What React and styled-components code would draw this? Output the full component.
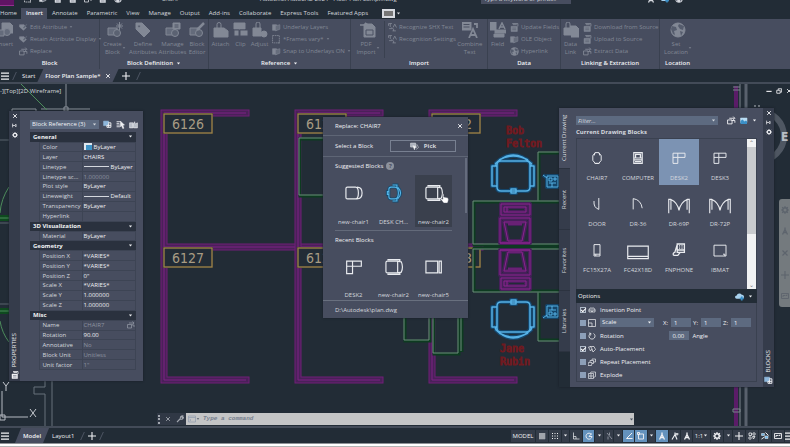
import React from "react"
import styled, { createGlobalStyle, css } from "styled-components"

const colors = {
  base: "#222c36",
  panel: "#474d5f",
  strip: "#353c4b",
  dark: "#2a313e",
  field: "#5d6a80",
  line: "#3a4150",
  text: "#d5d8de",
  bright: "#f0f1f4",
  muted: "#828895",
  active: "#6492bd",
}

const GlobalStyle = createGlobalStyle`
  * {
    box-sizing: border-box;
  }
  body {
    margin: 0;
    background: ${colors.base};
    overflow: hidden;
  }
  body, button, input, select {
    font-family: "Open Sans", "Noto Sans", sans-serif;
    font-size: 6px;
    line-height: 8px;
    color: ${colors.text};
  }
  button, input, select {
    margin: 0;
    padding: 0;
    border: 0;
    border-radius: 0;
    background: none;
  }
  h2, h3, p {
    margin: 0;
    font-size: 6px;
    line-height: 8px;
  }
  svg {
    display: block;
    flex: none;
  }
`

/* ---------- icons ---------- */

const paths = {
  caret: <path d="M3 5h10l-5 6z" fill="currentColor" stroke="none" />,
  menu: <path d="M0 2h16M0 8h16M0 14h16" strokeWidth="2.5" />,
  close: <path d="M3 3l10 10M13 3L3 13" strokeWidth="2.4" />,
  plus: <path d="M8 0v16M0 8h16" strokeWidth="2.2" />,
  min: <path d="M1 9h14" strokeWidth="3" />,
  restore: <path d="M2 6h9v8H2zM6 6V2h9v9h-4" strokeWidth="2.2" />,
  pin: <path d="M2 2v12M2 8h6M8 8l5-4v8z" strokeWidth="2.4" />,
  gear: <g><circle cx="8" cy="8" r="4.5" strokeWidth="3" /><path d="M8 0v3M8 13v3M0 8h3M13 8h3M2.3 2.3l2 2M11.7 11.7l2 2M2.3 13.7l2-2M11.7 4.3l2-2" strokeWidth="2.2" /></g>,
  insert: <g><path d="M5 1h8l3 3v7H5z" fill="currentColor" /><circle cx="10" cy="10" r="3.5" fill="#646b7b" /><path d="M0 8h7v6H0z" fill="#646b7b" /></g>,
  create: <g><path d="M1 6h9v7H1z" fill="#646b7b" /><circle cx="10" cy="11" r="3.5" fill="#5b6272" /><path d="M12.5 0v8M9 4h7M10 1.500l5 5M15 1.500l-5 5" /></g>,
  tag: <path fillRule="evenodd" d="M1 1h6l8 8-6 6-8-8zM4 3a1.200 1.200 0 1 0 .1 0z" fill="currentColor" />,
  manage: <g><path d="M1 6h9v7H1z" fill="#646b7b" /><circle cx="10" cy="11" r="3.5" fill="#5b6272" /><path d="M8 1h7v6H8z" fill="currentColor" /><path d="M9.500 3h4M9.500 5h4" stroke="#4b5162" /></g>,
  editor: <g><path d="M1 6h9v7H1z" fill="#646b7b" /><circle cx="10" cy="11" r="3.500" fill="#5b6272" /><path d="M8 8l7-7" strokeWidth="2.5" /></g>,
  attach: <g><path d="M1 6h10l4 3v6H1z" fill="currentColor" /><path d="M4 9V2.500a2 2 0 0 1 4 0V8" /></g>,
  clip: <g><path d="M1 1h11v6H1z" fill="currentColor" /><path d="M1 8h5v6H1zM7 8h8v6H7z" fill="currentColor" stroke="#4b5162" /></g>,
  adjust: <g><path d="M1 6h8v8H1z" fill="currentColor" /><path d="M4 7V2a2 2 0 0 1 4 0v5" /><circle cx="12" cy="12" r="3" fill="currentColor" /></g>,
  pdf: <g><path d="M4 2h8l3 3v10H4z" fill="currentColor" /><path d="M0 3h7M5 1l3 2-3 2" strokeWidth="1.600" /><path d="M6 8h7v5H6z" stroke="#4b5162" /></g>,
  combine: <g><path d="M0 0h9v8H0z" fill="currentColor" /><path d="M1.500 2.500h6M1.500 5h6" stroke="#4b5162" /><path d="M7 16l4-9 4 9M8.500 13h5M12 2h3v4" strokeWidth="1.800" /></g>,
  field: <g><path d="M0 0h6v8H0zM5 8h11v3H5zM4 12h10v3H4z" fill="currentColor" /><path d="M9 7l3-6 3 6M10 5h4" strokeWidth="1.500" /></g>,
  link: <g><path d="M1 6h9v7H1z" fill="currentColor" /><path d="M7 4h6l3 3v8H8" fill="currentColor" /><path d="M3 6V2a2 2 0 0 1 4 0v5" /></g>,
  globe: <g><circle cx="8" cy="8" r="7" fill="currentColor" /><path d="M2 4l4 1 1 3-3 1 1 4-2-1-2-5zM9 2l5 2-1 4-3-1-2-3zM10 9l3 1-2 4z" fill="#555c6d" stroke="none" /></g>,
  tagEdit: <g><path d="M1 3h8l4 5-5 5-7-6z" fill="currentColor" /><path d="M8 9l6-7" strokeWidth="2" stroke="#5b6272" /></g>,
  swap: <path d="M1 7h8v7H1zM8 8h6v4M4 4h9M11 1l3 3-3 3" strokeWidth="1.600" />,
  layers: <g><path d="M1 3h7v10H1z" fill="currentColor" /><path d="M6 5l8-2v8l-8 3z" fill="#666d7c" /></g>,
  frame: <path d="M1 1h12v13H1zM11 14h4" strokeWidth="1.500" strokeDasharray="3 1" />,
  text: <path d="M1 5V1h6M4 1v6M9 8l3-6 3 6M2 10h6l-2-2M8 14h6M10 10v4" strokeWidth="1.500" />,
  sheet: <g><path d="M2 6h11v9H2z" fill="currentColor" /><path d="M4 1h10v5M5 3h7" strokeWidth="1.600" /><path d="M4 9h7M4 12h7" stroke="#4b5162" /></g>,
  grid: <path d="M2 4h13M2 8h13M2 12h13M4 2v13M8 2v13M12 2v13" strokeWidth="1.400" />,
  dots: <path d="M2 3h12M2 8h12M2 13h12" strokeWidth="2" strokeDasharray="2 3" />,
  ortho: <path d="M3 1v13h12M3 9h5v5" strokeWidth="1.400" />,
  polar: <path d="M13 5a6 6 0 1 0 1 4H8l5-6" strokeWidth="1.800" />,
  iso: <path d="M4 2l10 12M9 1v5M6 9v6" strokeWidth="1.500" stroke="#a5abb5" />,
  angle: <path d="M14 2L3 13h12" strokeWidth="2" />,
  osnap: <path d="M3 4h10v10H3zM1 1h4v4H1z" strokeWidth="1.800" />,
  person: <path d="M8 1v6M8 5l-5 10M8 5l5 10M5 11h6" strokeWidth="2.600" />,
  personDot: <path d="M8 1v6M8 5l-6 10M8 5l4 10M12 2v5M9 4h6" strokeWidth="2.200" />,
  shapes: <g><path d="M2 2h5v5H2zM9 9h5l-3 5z" strokeWidth="1.600" /><circle cx="12" cy="4" r="2.500" strokeWidth="1.600" /><circle cx="4" cy="12" r="2.500" strokeWidth="1.600" /></g>,
  perf: <g><path d="M1 3h6v4H1zM8 8h6v5H8z" fill="#6cb4e8" /><path d="M9 1l6 6M1 14l6-4" strokeWidth="2" /></g>,
  screen: <path d="M1 3h14v10H1zM4 10V7h4M9 7h3V5" strokeWidth="1.800" />,
  wrench: <path d="M2 14l7-7M9 7a4 4 0 0 1 5-5l-2 3 1 1 2-1a4 4 0 0 1-6 3" strokeWidth="2.200" />,
  chairIn: <path d="M2 12V8l2-4h3M2 12h12V8l-2-4H9M1 8h5M10 8h5M8 3v8M6 9l2 3 2-3" strokeWidth="1.300" />,
  scale: <path d="M1 1h14v14H1zM1 8h7v7" strokeWidth="1.400" />,
  rotate: <path d="M5 3a6 6 0 1 0 6 0M2 2l4 1-1 4" strokeWidth="1.600" />,
  auto: <path d="M1 4l4 8 3-4 2 6 5-5-3-6H7zM5 2l3 6" strokeWidth="1.400" />,
  repeat: <path d="M1 9h7l-1 6H0zM4 8V5h7v6H8M8 5V2h7v6h-4" strokeWidth="1.300" />,
  explode: <path d="M1 5h10v10H1zM4 5l2-3h9v9l-4 2M4 8h4v4H4z" strokeWidth="1.300" />,
  cursorAdd: <g><path d="M1 2h9v8H1z" fill="#8eb7db" stroke="#8eb7db" /><path d="M9 5h5v8H7V9M10 6v7M7 9.500h7" strokeWidth="1.700" /></g>,
  select: <g><path d="M1 3h7M1 6h5M1 9h6M1 12h6" strokeWidth="1.500" /><path d="M8 2l7 7-3 .5 2 5-2 .5-2-5-2 2z" fill="currentColor" /></g>,
  quick: <path d="M1 5h6v9H1zM7 8l3-5 1 4 4-2v9H8z" fill="#b9bec8" />,
  image: <g><path d="M1 2h13v9H1z" fill="#b9dcf3" stroke="#b9dcf3" /><path d="M1 8l4-3 4 4 3-2 2 2v5H1z" fill="#3b8fc6" stroke="none" /></g>,
  cloud: <g><path d="M3 12a3 3 0 0 1 0-6 5 5 0 0 1 9-1 3 3 0 0 1 1 7z" fill="#a9d2ef" stroke="none" /><path d="M12 8v7M8.500 11.500h7" stroke="#3b8fc6" strokeWidth="3" /></g>,
  pick: <g><path d="M1 2h9v7H1z" fill="#aab0bc" stroke="#dfe2e8" /><path d="M8 6l5-1 2 5-4 3" /><path d="M5 6l3 8 1-4 3-1z" fill="#fff" /></g>,
  prompt: <path d="M1 2h14v12H1zM1 5h14M3 8l3 2-3 2" stroke="#8b98ab" strokeWidth="1.300" />,
}

const Icon = ({ name, size = 8 }) => (
  <svg
    width={size}
    height={size}
    viewBox="0 0 16 16"
    fill="none"
    stroke="currentColor"
    aria-hidden="true"
  >
    {paths[name]}
  </svg>
)

/* ---------- frame ---------- */

const Window = styled.div`
  display: flex;
  flex-direction: column;
  min-height: 100vh;
  background: ${colors.base};
`

const TitleBar = styled.header`
  display: flex;
  align-items: flex-start;
  height: 8px;
  overflow: hidden;
`

const AppBadge = styled.div`
  width: 14px;
  height: 6px;
  background: #601464;
  border-bottom: 1px solid #93308f;
`

const TitleTools = styled.div`
  display: flex;
  gap: 7px;
  margin: -5px 0 0 10px;
  width: 138px;
`

const TitleText = styled.p`
  margin-top: -5px;
  width: ${p => p.$width}px;
  white-space: nowrap;
`

const TitleSearch = styled.input`
  width: 90px;
  height: 10px;
  margin-top: -6px;
  padding-left: 3px;
  background: ${colors.panel};
  &::placeholder {
    color: ${colors.text};
  }
`

const TitleRight = styled.div`
  display: flex;
  gap: 6px;
  margin: -5px 0 0 76px;
`

const MenuTabs = styled.nav`
  display: flex;
  align-items: stretch;
  height: 11px;
`

const MenuTab = styled.button`
  padding: 0 4px 0 5px;
  line-height: 11px;
  white-space: nowrap;
  ${p => p.$first && css`padding-left: 0;`}
  ${p =>
    p.$active &&
    css`
      background: ${colors.panel};
      color: ${colors.bright};
      font-weight: 600;
    `}
`

const MediaTab = styled.button`
  display: flex;
  align-items: center;
  gap: 1px;
  margin-left: 10px;
  &::before {
    content: "";
    width: 9px;
    height: 5px;
    border: 2px solid #d8dbe1;
    background: #777;
  }
`

const Ribbon = styled.div`
  display: flex;
  height: 50px;
  background: ${colors.panel};
  color: ${colors.muted};
`

const RibbonPanel = styled.section`
  display: flex;
  flex-direction: column;
  flex: none;
  width: ${p => p.$width}px;
  border-right: 1px solid ${p => (p.$last ? "transparent" : colors.line)};
`

const RibbonTools = styled.div`
  display: flex;
  flex: 1;
  padding: 2px 0 0 ${p => p.$pad || 0}px;
`

const RibbonTitle = styled.h2`
  display: flex;
  justify-content: center;
  align-items: center;
  gap: 3px;
  height: 11px;
  padding-bottom: 1px;
  color: ${colors.bright};
  font-weight: 600;
`

const BigTool = styled.button`
  display: flex;
  flex-direction: column;
  align-items: center;
  flex: none;
  width: ${p => p.$width}px;
  gap: 2px;
  padding-top: 1px;
  color: inherit;
  margin-left: ${p => (p.$cut ? -6 : 0)}px;
`

const BigLabel = styled.span`
  display: flex;
  align-items: center;
  white-space: pre;
  line-height: 8px;
  text-align: center;
`

const ToolStack = styled.div`
  display: flex;
  flex-direction: column;
  padding-left: 3px;
  ${p => p.$ruled && css`border-left: 1px solid ${colors.line};`}
`

const SmallTool = styled.button`
  display: flex;
  align-items: center;
  gap: 2px;
  height: 12px;
  color: inherit;
  white-space: nowrap;
`

const ribbon = [
  {
    title: "Block", width: 100,
    big: [["insert", "Insert\n", 22, true]],
    small: [["tagEdit", "Edit Attribute", true], ["tagEdit", "Retain Attribute Display", true], ["swap", "Replace"]],
  },
  {
    title: "Block Definition", width: 109, drop: true, pad: 1,
    big: [["create", "Create\nBlock", 27, false, true], ["tag", "Define\nAttributes", 30], ["manage", "Manage\nAttributes", 29], ["editor", "Block\nEditor", 20]],
  },
  {
    title: "Reference", width: 142, drop: true, pad: 1,
    big: [["attach", "Attach", 21], ["clip", "Clip", 19], ["adjust", "Adjust", 19]],
    small: [["layers", "Underlay Layers"], ["frame", "*Frames vary*", true], ["layers", "Snap to Underlays ON", true]],
  },
  {
    title: "Import", width: 137, pad: 1,
    big: [["pdf", "PDF\nImport", 32, false, true]],
    small: [["text", "Recognize SHX Text"], ["text", "Recognition Settings"]],
    after: [["combine", "Combine\nText", 28]],
  },
  {
    title: "Data", width: 73,
    big: [["field", "Field", 19]],
    small: [["sheet", "Update Fields"], ["layers", "OLE Object"], ["globe", "Hyperlink"]],
  },
  {
    title: "Linking & Extraction", width: 99,
    big: [["link", "Data\nLink", 19]],
    small: [["sheet", "Download from Source"], ["sheet", "Upload to Source"], ["swap", "Extract  Data"]],
  },
  { title: "Location", width: 36, big: [["globe", "Set\nLocation", 36, false, true]], last: true },
]

const renderBig = ([icon, label, width, cut, drop]) => (
  <BigTool key={label} $width={width} $cut={cut}>
    <Icon name={icon} size={16} />
    <BigLabel>
      {label}
      {drop && <Icon name="caret" size={4} />}
    </BigLabel>
  </BigTool>
)

const RibbonBar = () => (
  <Ribbon>
    {ribbon.map(p => (
      <RibbonPanel key={p.title} $width={p.width} $last={p.last}>
        <RibbonTools $pad={p.pad}>
          {p.big.map(renderBig)}
          {p.small && (
            <ToolStack $ruled={p.title === "Import"}>
              {p.small.map(([icon, label, drop]) => (
                <SmallTool key={label}>
                  <Icon name={icon} size={9} />
                  {label}
                  {drop && <Icon name="caret" size={4} />}
                </SmallTool>
              ))}
            </ToolStack>
          )}
          {p.after && p.after.map(renderBig)}
        </RibbonTools>
        <RibbonTitle>
          {p.title}
          {p.drop && <Icon name="caret" size={5} />}
        </RibbonTitle>
      </RibbonPanel>
    ))}
  </Ribbon>
)

const TabStrip = styled.nav`
  display: flex;
  align-items: center;
  height: ${p => p.$height}px;
  padding-left: 1px;
  background: ${colors.base};
  ${p =>
    p.$top
      ? css`border-bottom: 2px solid #434b58;`
      : css`border-top: 2px solid #434b58;`}
`

const StripButton = styled.button`
  display: flex;
  align-items: center;
  color: ${colors.bright};
  padding: 0 ${p => p.$pad || 0}px;
`

const SlantTab = styled.button`
  display: flex;
  align-items: center;
  align-self: stretch;
  gap: 4px;
  padding: 0 8px;
  font-weight: 600;
  color: ${colors.bright};
  background: ${colors.panel};
  clip-path: polygon(6px 0, 100% 0, calc(100% - 6px) 100%, 0 100%);
`

const Slash = styled.span`
  width: 1px;
  height: 8px;
  margin: 0 5px;
  background: #4d5563;
  transform: skewX(-25deg);
`

const StatusTools = styled.div`
  display: flex;
  align-items: center;
  gap: 1px;
  margin-left: auto;
  margin-right: -3px;
  height: 12px;
`

const StatusButton = styled.button`
  display: flex;
  align-items: center;
  justify-content: center;
  flex: none;
  width: ${p => p.$width}px;
  height: 12px;
  color: ${colors.bright};
  background: ${p => (p.$active ? colors.active : "#343c49")};
`

const BottomEdge = styled.div`
  height: 4px;
  background: #fff;
  border-top: 1px solid #8d9196;
  border-bottom: 1px solid #b5b5b5;
`

/* ---------- drawing ---------- */

const Workspace = styled.main`
  position: relative;
  flex: 1;
  overflow: hidden;
`

const Sheet = styled.svg`
  position: absolute;
  width: 100%;
  height: 100%;
  text {
    font-family: "DejaVu Sans Condensed", "Roboto", sans-serif;
  }
`

const ViewLabel = styled.p`
  position: absolute;
  left: 0;
  top: 3px;
`

const ViewButtons = styled.div`
  position: absolute;
  right: -2px;
  top: 4px;
  display: flex;
  gap: 4px;
`

const NavBar = styled.div`
  position: absolute;
  right: 0;
  top: 115px;
  width: 11px;
  height: 108px;
  border-radius: 3px 0 0 3px;
  background: #747a7e;
  color: #5d646d;
  display: flex;
  flex-direction: column;
  align-items: center;
  justify-content: space-around;
`

const Wall = ({ d }) => (
  <g fill="none">
    <path d={d} stroke="#701f78" strokeWidth="7" strokeLinecap="square" />
    <path d={d} stroke="#4a2159" strokeWidth="5" strokeLinecap="square" />
    <path d={d} stroke="#7c2385" strokeWidth="1" />
  </g>
)

const Desk = ({ d }) => (
  <g fill="none">
    <path d={d} stroke="#0d3b20" strokeWidth="3" transform="translate(1 1)" />
    <path d={d} stroke="#6e8d7c" strokeWidth="1" />
  </g>
)

const RoomTag = ({ x, y, children }) => (
  <g>
    <rect x={x} y={y} width="48" height="19" fill={colors.base} stroke="#4b3f24" strokeWidth="2" />
    <rect x={x} y={y} width="48" height="19" fill="none" stroke="#a08d5c" />
    <text x={x + 24} y={y + 15} fontSize="14" textAnchor="middle" fill="#a89c84">
      {children}
    </text>
  </g>
)

const chairPath =
  "M497 165q0-4 4-4h25q4 0 4 4v22q0 4-4 4h-25q-4 0-4-4zM495 164q18-18 37 0M495 164l2 3M532 164l-2 3M499 160q14-8 29 0M492 166h5v20h-5zM530 166h4v20h-4zM511 189h5v4h-5z"
const sofaPath =
  "M501 204h29v11h-29zM504 207h22v5h-22zM507 207v5M500 218h30v25h-30zM504 222h22l-4 19h-14zM508 224h14M500 243h30"
const phonePath =
  "M547 176h11v11h-11zM549 178h3v3h-3zM554 178h2v2h-2zM549 183h7M552 183v4M543 175l4 3"

const Station = ({ flip }) => (
  <g transform={flip ? "translate(0 493) scale(1 -1)" : undefined} fill="none" strokeLinejoin="round">
    <Desk d="M570 152H538V201" />
    <Desk d="M570 201H473V244H570" />
    <path d={sofaPath} stroke="#46205a" strokeWidth="4" />
    <path d={sofaPath} stroke="#8c2390" />
    <path d={chairPath} stroke="#15466b" strokeWidth="4" />
    <path d={chairPath} stroke="#55b1e6" strokeWidth="1.500" />
    <path d={phonePath} stroke="#15466b" strokeWidth="4" />
    <path d={phonePath} stroke="#55b1e6" />
  </g>
)

const Person = styled.text`
  && {
    font-family: "DejaVu Sans Mono", monospace;
  }
  font-size: 10px;
  fill: #8a1a1f;
  stroke: #6f1a20;
`

const Drawing = () => (
  <Sheet aria-hidden="true">
    <g transform="translate(0 -84)">
      <g stroke="#8b929b" fill="none">
        <path d="M12 112v-3h24v3M41 109h49M66 84v23M64 107h4v4h-4z" />
        <path d="M0 140h9M0 223h9M0 304h9" stroke="#59626d" />
        <path d="M45 380v7H34v7h11v34M52 380v48" stroke="#66707b" />
        <path d="M2 391v26h26M0 415h5v5H0z" stroke="#b5bac2" />
        <path d="M3 382l3 4 3-4M6 386v5M30 409l6 8M36 409l-6 8" stroke="#c6cad0" />
      </g>
      <path d="M21 84l26 26M9 187q-8 12-9 26M0 321q2 12 9 21" stroke="#4d8d5c" fill="none" />
      <path d="M0 218h9M0 311h9" stroke="#0f4a1f" strokeWidth="6" />
      <path d="M0 218h9M0 311h9" stroke="#4d8d5c" />
      <Wall d="M164 114V380M164 113H246M164 247H480M164 380H246" />
      <Wall d="M298 114V380M298 113H380M298 380H380" />
      <Wall d="M432 114V380M432 113H514M432 380H514" />
      <RoomTag x={164} y={114}>6126</RoomTag>
      <RoomTag x={164} y={248}>6127</RoomTag>
      <RoomTag x={298} y={114}>6128</RoomTag>
      <RoomTag x={298} y={248}>6129</RoomTag>
      <RoomTag x={432} y={114}>6132</RoomTag>
      <RoomTag x={432} y={248}>6133</RoomTag>
      <Desk d="M330 138H299V195H330M404 310V340H429V310M433 310V353H458V310M461 310V351" />
      <Station />
      <Station flip />
      <Person x="506" y="134">Bob</Person>
      <Person x="506" y="147">Felton</Person>
      <Person x="500" y="352">Jane</Person>
      <Person x="500" y="365">Rubin</Person>
      <path d="M565 350v34M736 86v342" stroke="#5b1c68" strokeWidth="4" fill="none" />
      <path d="M568 350v30M740 84v344M733 87h7M733 90h7M733 409h7v3h-7z" stroke="#7b838c" fill="none" />
      <path d="M746 84v344" stroke="#59616d" strokeWidth="3" />
      <circle cx="759" cy="136" r="25" stroke="#4f5762" strokeWidth="6" fill="none" />
      <path d="M754 106h2M758 106h2" stroke="#b9bec4" />
      <text x="781" y="141" fontSize="12" fontWeight="700" fill="#b9bec4">E</text>
    </g>
  </Sheet>
)

/* ---------- palettes ---------- */

const Palette = styled.aside`
  position: absolute;
  display: flex;
  top: ${p => p.$top}px;
  ${p => (p.$right !== undefined ? css`right: ${p.$right}px;` : css`left: ${p.$left}px;`)}
  box-shadow: 0 0 2px #171e26;
`

const PaletteStrip = styled.div`
  display: flex;
  flex-direction: column;
  align-items: center;
  gap: 4px;
  width: 11px;
  padding: 2px 0;
  background: ${colors.strip};
  color: ${colors.bright};
`

const StripTitle = styled.span`
  margin-top: auto;
  writing-mode: vertical-rl;
  transform: rotate(180deg);
  line-height: 9px;
`

const PaletteBody = styled.div`
  background: ${colors.panel};
  padding: ${p => p.$pad};
  width: ${p => p.$width}px;
`

const FieldWrap = styled.div`
  display: flex;
  align-items: center;
  flex: 0 0 ${p => p.$width}px;
  height: 9px;
  padding-right: 2px;
  background: ${colors.field};
`

const FieldSelect = styled.select`
  flex: 1;
  min-width: 0;
  padding-left: 2px;
  appearance: none;
  line-height: 9px;
  color: ${colors.bright};
`

const FilterInput = styled.input`
  flex: 1;
  min-width: 0;
  padding-left: 2px;
  font-style: italic;
  &::placeholder {
    color: ${colors.text};
  }
`

const ToolRow = styled.div`
  display: flex;
  align-items: center;
  gap: 4px;
  padding-bottom: 3px;
`

const IconButton = styled.button`
  display: flex;
  color: ${colors.bright};
`

const PropTable = styled.table`
  width: 100%;
  height: 238px;
  table-layout: fixed;
  border-collapse: collapse;
  td, th {
    padding: 0;
    line-height: 8px;
    white-space: nowrap;
    overflow: hidden;
  }
`

const GroupHead = styled.th`
  height: 10px;
  text-align: left;
  background: ${colors.dark};
  color: ${colors.bright};
  div {
    display: flex;
    justify-content: space-between;
    align-items: center;
    padding: 0 3px;
  }
`

const PropName = styled.th`
  && {
    padding-left: 3px;
    text-overflow: ellipsis;
  }
  font-weight: 400;
  text-align: left;
  border: 1px solid #3d4454;
`

const PropValue = styled.td`
  && {
    padding-left: 1px;
  }
  border: 1px solid #3d4454;
  color: ${p => (p.$dim ? "#8d93a0" : colors.bright)};
  div {
    display: flex;
    align-items: center;
    gap: 2px;
  }
`

const Swatch = styled.i`
  width: 8px;
  height: 7px;
  background: #3f93c6;
  border: solid #dfe7ee;
  border-width: 2px 0 0 2px;
`

const LineSample = styled.i`
  width: 25px;
  height: 1px;
  background: ${colors.text};
`

const properties = [
  ["General", [
    ["Color", "ByLayer", "swatch"], ["Layer", "CHAIRS"], ["Linetype", "ByLayer", "line"],
    ["Linetype scale", "1.000000", "dim"], ["Plot style", "ByLayer"], ["Lineweight", "Default", "line"],
    ["Transparency", "ByLayer"], ["Hyperlink", ""],
  ]],
  ["3D Visualization", [["Material", "ByLayer"]]],
  ["Geometry", [
    ["Position X", "*VARIES*"], ["Position Y", "*VARIES*"], ["Position Z", "0\""],
    ["Scale X", "*VARIES*"], ["Scale Y", "1.000000"], ["Scale Z", "1.000000"],
  ]],
  ["Misc", [
    ["Name", "CHAIR7", "dim edit"], ["Rotation", "90.00"], ["Annotative", "No", "dim"],
    ["Block Unit", "Unitless", "dim"], ["Unit factor", "1\"", "dim"],
  ]],
]

const Push = styled.span`
  margin-left: auto;
`

const PropertiesPalette = () => (
  <Palette $left={9} $top={27}>
    <PaletteStrip>
      <IconButton aria-label="Close"><Icon name="close" size={6} /></IconButton>
      <IconButton aria-label="Auto-hide"><Icon name="pin" size={5} /></IconButton>
      <IconButton aria-label="Settings"><Icon name="gear" size={6} /></IconButton>
      <StripTitle>PROPERTIES</StripTitle>
      <Icon name="sheet" size={8} />
    </PaletteStrip>
    <PaletteBody $width={123} $pad="9px 7px 11px 10px">
      <ToolRow>
        <FieldWrap $width={69}>
          <FieldSelect aria-label="Object type">
            <option>Block Reference (3)</option>
          </FieldSelect>
          <Icon name="caret" size={5} />
        </FieldWrap>
        <IconButton aria-label="Toggle pickadd"><Icon name="cursorAdd" size={9} /></IconButton>
        <IconButton aria-label="Select objects"><Icon name="select" size={9} /></IconButton>
        <IconButton aria-label="Quick select"><Icon name="quick" size={9} /></IconButton>
      </ToolRow>
      <PropTable>
        <colgroup>
          <col width="9" />
          <col width="43" />
          <col />
        </colgroup>
        <tbody>
          {properties.map(([group, rows]) => (
            <React.Fragment key={group}>
              <tr>
                <GroupHead colSpan={3}>
                  <div>{group}<Icon name="caret" size={5} /></div>
                </GroupHead>
              </tr>
              {rows.map(([name, value, kind = ""]) => (
                <tr key={name}>
                  <td />
                  <PropName scope="row">{name}</PropName>
                  <PropValue $dim={kind.includes("dim")}>
                    <div>
                      {kind === "swatch" && <Swatch />}
                      {kind === "line" && <LineSample />}
                      {value}
                      {kind.includes("edit") && <Push><Icon name="swap" size={8} /></Push>}
                    </div>
                  </PropValue>
                </tr>
              ))}
            </React.Fragment>
          ))}
        </tbody>
      </PropTable>
    </PaletteBody>
  </Palette>
)

/* ---------- block thumbnails ---------- */

const deskChair = "M10 6h5q5 0 5 8t-5 8h-5q-3 0-3-3V9q0-3 3-3M12 3h6v3M12 25h6v-3M19 6q8 8 0 16M5 12h2v4H5z"

const thumbs = {
  chair1: <path d="M5 6h11q4 0 4 8t-4 8H5q-2 0-2-2V8q0-2 2-2M18 6q7 0 7 8t-7 8" />,
  deskChair: <g><path d={deskChair} stroke="#174b6e" strokeWidth="4" /><path d={deskChair} stroke="#54b5e8" strokeWidth="1.500" /></g>,
  chair2: <path d="M5 6h14v16H5q-2 0-2-2V8q0-2 2-2M5 4h17v2M5 24h17v-2M19 6l5 1q3 7 0 14l-5 1" />,
  chair5: <path d="M3 6h16v16H3zM21 6h3v16h-3z" />,
  desk: <path d="M4 6h20v7H12v10H4zM4 13h8V6" />,
  oval: <path d="M11 5h6l4 5v8l-4 5h-6l-4-5v-8zM11 5l-2 5M17 5l2 5M10 23h8" />,
  computer: <path d="M7 5h14v18H7zM10 8h8v6h-8zM7 17h14M9 20h10M7 14h14" strokeWidth="2" />,
  door: <path d="M17 4v12M17 16v7q-9-3-8-14" />,
  dr36: <path d="M6 23V5q13 2 15 16" />,
  doors: <path d="M0 24V5h3q9 4 11 15Q16 9 25 5h3v19M3 5v14M25 5v14" strokeWidth="1.500" />,
  slot: <path d="M9 5h10v19H9zM9 21h10M12 24v-3" />,
  wide: <path d="M0 6h28v17H0zM0 20h28" />,
  phone: <path d="M11 4h12v14H11zM14 7h2M18 7h2M14 11h2M18 11h2M11 14h12M5 23q-2-4 2-5l4-13M5 23h7l4-5" strokeWidth="2.200" />,
  mat: <path d="M4 6h20v18H4zM19 21h3v3" />,
}

const Thumb = ({ name, size = 18 }) => (
  <svg width={size} height={size} viewBox="-1 -1 30 30" fill="none" stroke="#e9ebef" strokeWidth="1.600" aria-hidden="true">
    {thumbs[name]}
  </svg>
)

const Tile = styled.button`
  display: flex;
  flex-direction: column;
  align-items: center;
  justify-content: space-between;
  width: ${p => p.$width}px;
  height: ${p => p.$height}px;
  padding: ${p => p.$pad};
  white-space: nowrap;
  background: ${p => p.$fill || "none"};
`

/* ---------- replace dialog ---------- */

const Dialog = styled.section`
  position: absolute;
  left: 323px;
  top: 33px;
  width: 145px;
  background: ${colors.panel};
  box-shadow: 0 0 2px #171e26;
`

const DialogRow = styled.div`
  display: flex;
  align-items: center;
  justify-content: space-between;
  height: ${p => p.$height}px;
  padding: 0 ${p => p.$right || 12}px 0 12px;
  ${p => p.$top ? css`border-top: 1px solid #69707f;` : css`border-bottom: 1px solid #5e6575;`}
`

const DialogTitle = styled.h2`
  font-weight: 400;
  color: ${p => (p.$dim ? colors.text : colors.bright)};
`

const PickButton = styled.button`
  display: flex;
  align-items: center;
  justify-content: center;
  gap: 5px;
  width: 66px;
  height: 12px;
  border: 1px solid #788091;
  font-weight: 700;
`

const DialogBody = styled.div`
  position: relative;
  padding: 5px 16px 0 12px;
`

const Thumbnails = styled.div`
  display: grid;
  grid-template-columns: repeat(3, 40px);
  padding-top: 5px;
  ${p => p.$ruled && css`
    padding-bottom: 3px;
    margin-bottom: 5px;
    border-bottom: 1px solid #636a7a;
  `}
`

const SectionTitle = styled.h3`
  display: flex;
  align-items: center;
  gap: 3px;
  font-weight: 400;
  color: ${colors.bright};
`

const Help = styled.button`
  width: 8px;
  height: 8px;
  border-radius: 50%;
  background: #8c919c;
  color: ${colors.panel};
  font-weight: 700;
`

const Thumbbar = styled.div`
  position: absolute;
  top: 1px;
  right: 1px;
  width: 2px;
  height: 55px;
  background: #656c7d;
`

const HandCursor = styled.svg`
  position: absolute;
  left: 117px;
  top: 36px;
`

const ReplaceDialog = () => (
  <Dialog aria-label="Replace block">
    <DialogRow $height={19} $right={5}>
      <DialogTitle>Replace: CHAIR7</DialogTitle>
      <IconButton aria-label="Close"><Icon name="close" size={6} /></IconButton>
    </DialogRow>
    <DialogRow $height={21}>
      <DialogTitle>Select a Block</DialogTitle>
      <PickButton><Icon name="pick" size={9} />Pick</PickButton>
    </DialogRow>
    <DialogBody>
      <SectionTitle>Suggested Blocks <Help aria-label="Help">?</Help></SectionTitle>
      <Thumbnails $ruled>
        {[["chair1", "new-chair1"], ["deskChair", "DESK CH..."], ["chair2", "new-chair2"]].map(([t, label], i) => (
          <Tile key={label} $width={37} $height={52} $pad="7px 0 1px" $fill={i === 2 && "#3a404d"}>
            <Thumb name={t} size={22} />
            {label}
          </Tile>
        ))}
      </Thumbnails>
      <SectionTitle>Recent Blocks</SectionTitle>
      <Thumbnails>
        {[["desk", "DESK2"], ["chair2", "new-chair2"], ["chair5", "new-chair5"]].map(([t, label]) => (
          <Tile key={label} $width={37} $height={51} $pad="7px 0 1px">
            <Thumb name={t} size={22} />
            {label}
          </Tile>
        ))}
      </Thumbnails>
      <Thumbbar />
      <HandCursor width="9" height="11" viewBox="0 0 12 14" aria-hidden="true">
        <path d="M3 1q2-1 2 1v3l5 1q2 1 1 4l-1 3H5L1 8q0-2 3 0z" fill="#fff" stroke="#4a5160" strokeWidth=".5" />
      </HandCursor>
    </DialogBody>
    <DialogRow $height={18} $top>
      <DialogTitle $dim>D:\Autodesk\plan.dwg</DialogTitle>
    </DialogRow>
  </Dialog>
)

/* ---------- blocks palette ---------- */

const SideTabs = styled.div`
  display: flex;
  flex-direction: column;
  width: 11px;
  background: ${colors.base};
`

const SideTab = styled.button`
  height: 61px;
  writing-mode: vertical-rl;
  transform: rotate(180deg);
  line-height: 11px;
  text-align: center;
  background: ${p => (p.$active ? colors.panel : colors.strip)};
  border-top: 1px solid #2c3340;
`

const Gallery = styled.div`
  display: flex;
  margin-top: 2px;
  border: 1px solid #3a4150;
  border-bottom: 0;
`

const GalleryGrid = styled.div`
  flex: 1;
  display: grid;
  grid-template-columns: repeat(4, 40px);
  column-gap: 1px;
  height: 150px;
  align-content: start;
`

const ScrollTrack = styled.div`
  width: 9px;
  background: #f1f2f3;
  color: #777;
  display: flex;
  flex-direction: column;
  align-items: center;
  &::before, &::after {
    content: "⌃";
    height: 8px;
  }
  &::after {
    content: "⌄";
    margin-top: auto;
  }
`

const ScrollThumb = styled.div`
  width: 9px;
  height: 87px;
  background: #c9cbce;
`

const OptionsHead = styled.div`
  display: flex;
  align-items: center;
  justify-content: space-between;
  height: 14px;
  padding: 0 4px 0 2px;
  background: ${colors.base};
  color: ${colors.bright};
  div {
    display: flex;
    align-items: center;
    gap: 4px;
  }
`

const Options = styled.div`
  padding: 0 5px 0 3px;
  border: 1px solid #3a4150;
  border-top: 0;
`

const OptionRow = styled.div`
  display: flex;
  align-items: center;
  gap: 2px;
  height: 13px;
  white-space: nowrap;
`

const Check = styled.input.attrs({ type: "checkbox" })`
  appearance: none;
  width: 6px;
  height: 6px;
  background: #8d9fb8;
  &:checked {
    background: ${colors.panel};
    border: 1px solid #aeb9c8;
  }
  &:checked::after {
    content: "";
    display: block;
    width: 4px;
    height: 2px;
    border: solid #fff;
    border-width: 0 0 1px 1px;
    transform: rotate(-45deg);
  }
`

const OptionLabel = styled.label`
  display: flex;
  align-items: center;
  gap: 4px;
  color: ${colors.bright};
`

const NumberLabel = styled.label`
  display: flex;
  align-items: center;
  gap: 3px;
  color: ${colors.bright};
`

const NumberInput = styled.input`
  width: 20px;
  height: 9px;
  padding-left: 3px;
  background: ${colors.field};
  color: ${colors.bright};
`

const Slack = styled.span`
  width: 41px;
`

const blocks = [
  ["oval", "CHAIR7"], ["computer", "COMPUTER"], ["desk", "DESK2"], ["desk", "DESK3"],
  ["door", "DOOR"], ["dr36", "DR-36"], ["doors", "DR-69P"], ["doors", "DR-72P"],
  ["slot", "FC15X27A"], ["wide", "FC42X18D"], ["phone", "FNPHONE"], ["mat", "IBMAT"],
]

const Option = ({ id, icon, label, checked, children }) => (
  <OptionRow>
    <Check id={id} defaultChecked={checked} />
    <OptionLabel htmlFor={id}><Icon name={icon} size={8} />{label}</OptionLabel>
    {children}
  </OptionRow>
)

const BlocksPalette = () => (
  <Palette $right={16} $top={24}>
    <SideTabs>
      {["Current Drawing", "Recent", "Favorites", "Libraries"].map((t, i) => (
        <SideTab key={t} $active={i === 0}>{t}</SideTab>
      ))}
    </SideTabs>
    <PaletteBody $width={193} $pad="8px 6px 5px">
      <ToolRow>
        <FieldWrap $width={142}>
          <FilterInput aria-label="Filter" placeholder="Filter..." />
          <Icon name="caret" size={5} />
        </FieldWrap>
        <Push><IconButton aria-label="Insert drawing"><Icon name="swap" size={9} /></IconButton></Push>
        <IconButton aria-label="View"><Icon name="image" size={8} /></IconButton>
        <IconButton aria-label="View options"><Icon name="caret" size={5} /></IconButton>
      </ToolRow>
      <h2>Current Drawing Blocks</h2>
      <Gallery>
        <GalleryGrid>
          {blocks.map(([t, label]) => (
            <Tile key={label} $width={40} $height={46} $pad="10px 0 3px" $fill={label === "DESK2" && "#7c93b3"}>
              <Thumb name={t} size={t === "doors" || t === "wide" ? 22 : 18} />
              {label}
            </Tile>
          ))}
        </GalleryGrid>
        <ScrollTrack><ScrollThumb /></ScrollTrack>
      </Gallery>
      <OptionsHead>
        <span>Options</span>
        <div><Icon name="cloud" size={9} /><Icon name="caret" size={5} /></div>
      </OptionsHead>
      <Options>
        <Option id="insertion" icon="chairIn" label="Insertion Point" checked />
        <OptionRow>
          <Check id="scale" aria-label="Use scale" />
          <OptionLabel as="div">
            <Icon name="scale" size={8} />
            <FieldWrap $width={54}>
              <FieldSelect aria-label="Scale mode"><option>Scale</option></FieldSelect>
              <Icon name="caret" size={5} />
            </FieldWrap>
          </OptionLabel>
          <Push />
          {["X:", "Y:", "Z:"].map(axis => (
            <NumberLabel key={axis}>
              {axis}
              <NumberInput defaultValue="1" />
            </NumberLabel>
          ))}
        </OptionRow>
        <Option id="rotation" icon="rotate" label="Rotation">
          <Push />
          <NumberLabel>
            <NumberInput defaultValue="0.00" />
            Angle
          </NumberLabel>
          <Slack />
        </Option>
        <Option id="auto" icon="auto" label="Auto-Placement" checked />
        <Option id="repeat" icon="repeat" label="Repeat Placement" />
        <Option id="explode" icon="explode" label="Explode" />
      </Options>
    </PaletteBody>
    <PaletteStrip>
      <IconButton aria-label="Close"><Icon name="close" size={6} /></IconButton>
      <IconButton aria-label="Auto-hide"><Icon name="pin" size={5} /></IconButton>
      <IconButton aria-label="Settings"><Icon name="gear" size={6} /></IconButton>
      <StripTitle>BLOCKS</StripTitle>
      <Icon name="cursorAdd" size={9} />
    </PaletteStrip>
  </Palette>
)

/* ---------- command line ---------- */

const CommandLine = styled.form`
  position: absolute;
  left: 157px;
  right: 156px;
  bottom: 1px;
  display: flex;
  align-items: center;
  height: 12px;
  background: #c4c5c6;
  color: #49515f;
`

const CommandGrip = styled.div`
  display: flex;
  align-items: center;
  gap: 5px;
  align-self: stretch;
  width: 29px;
  padding-left: 1px;
  margin-right: 2px;
  background: #303845;
  color: #a2a7af;
  &::before {
    content: "";
    border-left: 2px dotted #a2a7af;
    height: 9px;
  }
`

const CommandInput = styled.input`
  flex: 1;
  padding-left: 3px;
  font-family: "Liberation Mono", monospace;
  font-style: italic;
  font-weight: 700;
  &::placeholder {
    color: #77808f;
  }
`

const status = [
  ["grid", 12], ["dots", 12], ["caret", 7], ["ortho", 12], ["polar", 11, true], ["caret", 8], ["iso", 9],
  ["caret", 8], ["angle", 11, true], ["osnap", 12, true], ["caret", 7], ["person", 12, true],
  ["personDot", 11], ["person", 11],
]
const statusEnd = [["gear", 12], ["caret", 8], ["plus", 12], ["shapes", 12], ["perf", 12], ["screen", 12], ["menu", 8]]

const renderStatus = ([icon, width, active], i) => (
  <StatusButton key={icon + i} $width={width} $active={active} aria-label={icon}>
    <Icon name={icon} size={icon === "caret" ? 5 : 8} />
  </StatusButton>
)

const menu = ["Home", "Insert", "Annotate", "Parametric", "View", "Manage", "Output", "Add-ins", "Collaborate", "Express Tools", "Featured Apps"]

const App = () => {
  return (
    <Window>
      <GlobalStyle />
      <TitleBar>
        <AppBadge />
        <TitleTools>
          {["frame", "layers", "sheet", "sheet", "swap", "sheet", "globe"].map((n, i) => (
            <Icon key={i} name={n} size={8} />
          ))}
        </TitleTools>
        <TitleText $width={98}>Share</TitleText>
        <TitleText $width={221}>Autodesk AutoCAD 2024 - Floor Plan Sample.dwg</TitleText>
        <TitleSearch aria-label="Search" placeholder="Type a keyword or phrase" />
        <TitleRight>
          <Icon name="person" /><Icon name="cloud" /><Icon name="globe" />
        </TitleRight>
      </TitleBar>
      <MenuTabs>
        {menu.map((m, i) => (
          <MenuTab key={m} $first={i === 0} $active={m === "Insert"}>{m}</MenuTab>
        ))}
        <MediaTab aria-label="More"><Icon name="caret" size={5} /></MediaTab>
      </MenuTabs>
      <RibbonBar />
      <TabStrip $height={15} $top>
        <StripButton aria-label="Menu"><Icon name="menu" size={8} /></StripButton>
        <Slash />
        <StripButton $pad={2}>Start</StripButton>
        <SlantTab>Floor Plan Sample*<Icon name="close" size={6} /></SlantTab>
        <StripButton $pad={3} aria-label="New tab"><Icon name="plus" size={8} /></StripButton>
        <Slash />
      </TabStrip>
      <Workspace>
        <Drawing />
        <ViewLabel>-][Top][2D Wireframe]</ViewLabel>
        <ViewButtons>
          {["min", "restore", "close"].map(n => (
            <IconButton key={n} aria-label={n}><Icon name={n} size={6} /></IconButton>
          ))}
        </ViewButtons>
        <NavBar>
          <Icon name="gear" /><Icon name="person" /><Icon name="close" /><Icon name="plus" /><Icon name="screen" />
        </NavBar>
        <PropertiesPalette />
        <ReplaceDialog />
        <BlocksPalette />
        <CommandLine>
          <CommandGrip><Icon name="close" size={6} /><Icon name="wrench" size={8} /></CommandGrip>
          <Icon name="prompt" size={8} />
          <Icon name="caret" size={4} />
          <CommandInput aria-label="Command" placeholder="Type a command" />
          <Icon name="caret" size={5} />
        </CommandLine>
      </Workspace>
      <TabStrip $height={17}>
        <StripButton aria-label="Menu"><Icon name="menu" size={8} /></StripButton>
        <StripButton as="span" $pad={3} />
        <SlantTab>Model</SlantTab>
        <StripButton $pad={3}>Layout1</StripButton>
        <Slash />
        <StripButton aria-label="New layout"><Icon name="plus" size={8} /></StripButton>
        <Slash />
        <StatusTools>
          <StatusButton $width={24}>MODEL</StatusButton>
          {status.map(renderStatus)}
          <StatusButton $width={17}>1:1<Icon name="caret" size={5} /></StatusButton>
          {statusEnd.map(renderStatus)}
        </StatusTools>
      </TabStrip>
      <BottomEdge />
    </Window>
  )
}

export default App
